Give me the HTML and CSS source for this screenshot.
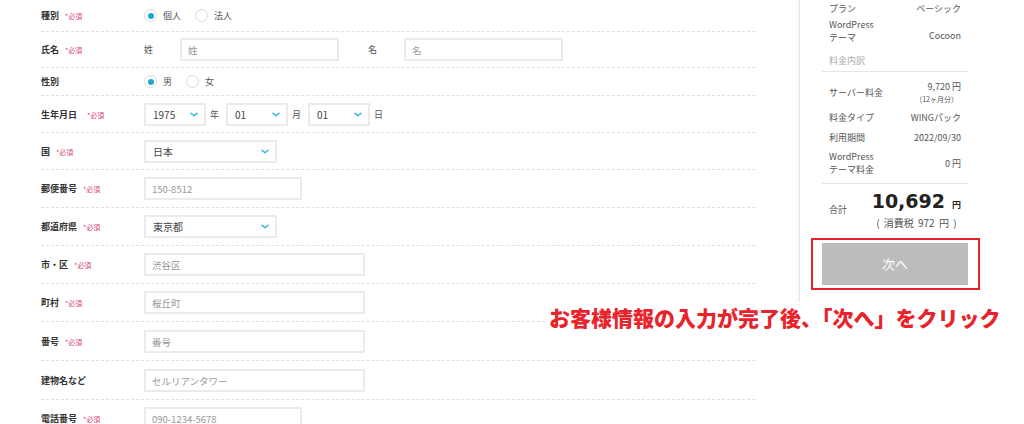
FILE: index.html
```html
<!DOCTYPE html>
<html lang="ja">
<head>
    <meta charset="UTF-8">
    <meta name="viewport" content="width=device-width, initial-scale=1.0">
    <title>お客様情報の入力</title>
    <link rel="stylesheet" href="styles.css">
</head>
<body>
    <div class="page">
        <form class="customer-form">
            <div class="row row-radio row-first">
                <div class="label">種別<span class="req">*必須</span></div>
                <div class="field">
                    <label class="radio"><span class="dot checked"></span>個人</label>
                    <label class="radio"><span class="dot"></span>法人</label>
                </div>
            </div>
            <div class="row row-name">
                <div class="label">氏名<span class="req">*必須</span></div>
                <div class="field">
                    <div class="name-part"><span class="name-label">姓</span><input class="input w-name" type="text" placeholder="姓"></div>
                    <div class="name-part"><span class="name-label">名</span><input class="input w-name" type="text" placeholder="名"></div>
                </div>
            </div>
            <div class="row row-radio">
                <div class="label">性別</div>
                <div class="field">
                    <label class="radio"><span class="dot checked"></span>男</label>
                    <label class="radio"><span class="dot"></span>女</label>
                </div>
            </div>
            <div class="row row-compact">
                <div class="label">生年月日<span class="req req-wide">*必須</span></div>
                <div class="field">
                    <div class="select w-date">1975<svg class="chevron" viewBox="0 0 8 5" width="8" height="5"><path d="M1 1.2l3 2.6 3-2.6" fill="none" stroke="#2fb3da" stroke-width="1.5" stroke-linecap="round" stroke-linejoin="round"/></svg></div>
                    <span class="unit">年</span>
                    <div class="select w-date">01<svg class="chevron" viewBox="0 0 8 5" width="8" height="5"><path d="M1 1.2l3 2.6 3-2.6" fill="none" stroke="#2fb3da" stroke-width="1.5" stroke-linecap="round" stroke-linejoin="round"/></svg></div>
                    <span class="unit">月</span>
                    <div class="select w-date">01<svg class="chevron" viewBox="0 0 8 5" width="8" height="5"><path d="M1 1.2l3 2.6 3-2.6" fill="none" stroke="#2fb3da" stroke-width="1.5" stroke-linecap="round" stroke-linejoin="round"/></svg></div>
                    <span class="unit">日</span>
                </div>
            </div>
            <div class="row row-compact">
                <div class="label">国<span class="req">*必須</span></div>
                <div class="field">
                    <div class="select w-pref">日本<svg class="chevron" viewBox="0 0 8 5" width="8" height="5"><path d="M1 1.2l3 2.6 3-2.6" fill="none" stroke="#2fb3da" stroke-width="1.5" stroke-linecap="round" stroke-linejoin="round"/></svg></div>
                </div>
            </div>
            <div class="row">
                <div class="label">郵便番号<span class="req">*必須</span></div>
                <div class="field"><input class="input w-short" type="text" placeholder="150-8512"></div>
            </div>
            <div class="row">
                <div class="label">都道府県<span class="req">*必須</span></div>
                <div class="field">
                    <div class="select w-pref">東京都<svg class="chevron" viewBox="0 0 8 5" width="8" height="5"><path d="M1 1.2l3 2.6 3-2.6" fill="none" stroke="#2fb3da" stroke-width="1.5" stroke-linecap="round" stroke-linejoin="round"/></svg></div>
                </div>
            </div>
            <div class="row">
                <div class="label">市・区<span class="req">*必須</span></div>
                <div class="field"><input class="input w-long" type="text" placeholder="渋谷区"></div>
            </div>
            <div class="row">
                <div class="label">町村<span class="req">*必須</span></div>
                <div class="field"><input class="input w-long" type="text" placeholder="桜丘町"></div>
            </div>
            <div class="row row-loose">
                <div class="label">番号<span class="req">*必須</span></div>
                <div class="field"><input class="input w-long" type="text" placeholder="番号"></div>
            </div>
            <div class="row row-loose">
                <div class="label">建物名など</div>
                <div class="field"><input class="input w-long" type="text" placeholder="セルリアンタワー"></div>
            </div>
            <div class="row">
                <div class="label">電話番号<span class="req">*必須</span></div>
                <div class="field"><input class="input w-short" type="text" placeholder="090-1234-5678"></div>
            </div>
        </form>

        <aside class="summary">
            <div class="item item-plan"><span>プラン</span><span>ベーシック</span></div>
            <div class="item item-theme"><span>WordPress<br>テーマ</span><span class="theme-name">Cocoon</span></div>
            <div class="caption">料金内訳</div>
            <div class="divider"></div>
            <div class="item item-server">
                <span>サーバー料金</span>
                <span class="price">9,720 円<small>（12ヶ月分）</small></span>
            </div>
            <div class="item item-type"><span>料金タイプ</span><span>WINGパック</span></div>
            <div class="item item-period"><span>利用期間</span><span>2022/09/30</span></div>
            <div class="item item-fee"><span>WordPress<br>テーマ料金</span><span>0 円</span></div>
            <div class="divider divider-total"></div>
            <div class="item total">
                <span>合計</span>
                <div class="total-amount">
                    <div class="amount">10,692<span class="yen">円</span></div>
                    <div class="tax">( 消費税 972 円 )</div>
                </div>
            </div>
            <div class="next-wrap">
                <button type="button" class="next-btn">次へ</button>
                <div class="highlight"></div>
            </div>
        </aside>

        <div class="note">お客様情報の入力が完了後、「次へ」をクリック</div>
    </div>
</body>
</html>
```

FILE: styles.css
```css
body {
    margin: 0;
    background: #fff;
    color: #333;
    font-family: 'Noto Sans CJK JP', 'Noto Sans', sans-serif;
}
.page {
    position: relative;
    display: flex;
    align-items: flex-start;
}

/* form */
.customer-form {
    width: 714px;
    flex-shrink: 0;
    padding: 0 44px 0 41px;
}
.row {
    display: flex;
    align-items: center;
    min-height: 23px;
    padding: 7px 0;
    border-bottom: 1px dashed #e0e0e0;
}
.row-name {
    padding: 6px 0;
}
.row-compact {
    padding: 7px 0 6px;
}
.row-loose {
    padding: 8px 0 7px;
}
.row-radio {
    padding: 0;
    min-height: 27px;
}
.row-first {
    min-height: 31px;
}
.label {
    width: 103px;
    flex-shrink: 0;
    font-size: 9px;
    font-weight: 700;
    color: #333;
}
.req {
    margin-left: 6px;
    font-size: 7px;
    font-weight: 400;
    color: #d8437b;
}
.req-wide {
    margin-left: 10px;
}
.field {
    display: flex;
    align-items: center;
}
.radio {
    display: flex;
    align-items: center;
    gap: 6px;
    margin-right: 14px;
    font-size: 9px;
    color: #555;
}
.dot {
    position: relative;
    width: 11px;
    height: 11px;
    border: 1px solid #dcdcdc;
    border-radius: 50%;
    background: #fff;
}
.dot.checked::after {
    content: '';
    position: absolute;
    top: 2.5px;
    left: 2.5px;
    width: 6px;
    height: 6px;
    border-radius: 50%;
    background: #1ea7d6;
}
.name-part {
    display: flex;
    align-items: center;
    margin-right: 29px;
}
.name-label {
    width: 36px;
    font-size: 9px;
    color: #555;
}
.input {
    box-sizing: border-box;
    height: 23px;
    padding: 0 6px;
    border: 2px solid #ebebeb;
    border-radius: 0;
    font-family: inherit;
    font-size: 9.5px;
    color: #333;
    outline: none;
}
.input::placeholder {
    color: #999;
}
.w-name { width: 159px; }
.w-short { width: 158px; }
.w-long { width: 221px; }
.select {
    box-sizing: border-box;
    display: flex;
    align-items: center;
    justify-content: space-between;
    height: 23px;
    padding: 0 6px 0 7px;
    border: 2px solid #ebebeb;
    font-size: 10px;
    color: #444;
}
.chevron {
    display: block;
}
.w-date { width: 62px; }
.w-pref { width: 133px; }
.unit {
    margin: 0 7px 0 4px;
    font-size: 9px;
    color: #555;
}

/* order summary */
.summary {
    width: 146px;
    padding: 0 32px 21px 22px;
    border-left: 1px solid #e4e4e4;
    box-shadow: -2px 0 4px rgba(0, 0, 0, 0.04);
    font-size: 9px;
    color: #555;
}
.item {
    display: flex;
    justify-content: space-between;
    align-items: center;
    padding: 0 7px;
    line-height: 13px;
}
.item-plan { margin-top: 2px; }
.item-theme { margin-top: 2.5px; }
.item-server { margin-top: 7.5px; }
.item-type { margin-top: 5px; }
.item-period { margin-top: 7px; }
.item-fee { margin-top: 6.5px; }
.theme-name {
    align-self: flex-end;
    margin-bottom: 2px;
}
.caption {
    margin-top: 10px;
    padding: 0 7px;
    line-height: 13px;
    color: #aaa;
}
.divider {
    height: 1px;
    margin-top: 4.5px;
    background: #e6e6e6;
}
.divider-total {
    margin-top: 7px;
}
.price {
    display: flex;
    flex-direction: column;
    align-items: flex-end;
}
.price small {
    margin-right: 3px;
    font-size: 7px;
}
.total {
    margin-top: 5.5px;
}
.total-amount {
    display: flex;
    flex-direction: column;
    align-items: center;
}
.amount {
    font-family: 'DejaVu Sans', sans-serif;
    font-size: 19px;
    font-weight: 700;
    line-height: 22px;
    color: #222;
}
.yen {
    margin-left: 7px;
    font-family: 'Noto Sans CJK JP', sans-serif;
    font-size: 9px;
}
.tax {
    font-size: 10px;
    line-height: 13px;
    word-spacing: 2px;
}
.next-wrap {
    position: relative;
    margin-top: 14px;
}
.next-btn {
    display: block;
    width: 100%;
    height: 42px;
    border: none;
    background: #bcbcbc;
    color: #fff;
    font-family: inherit;
    font-size: 13px;
}
.highlight {
    position: absolute;
    top: -5px;
    bottom: -5px;
    left: -11px;
    right: -12px;
    border: 2px solid #e7232b;
}

/* annotation */
.note {
    position: absolute;
    top: 302px;
    left: 545px;
    padding: 3px 8px 3px 4px;
    background: #fff;
    color: #e8232c;
    font-size: 21px;
    font-weight: 900;
    line-height: 24px;
    white-space: nowrap;
}
```
